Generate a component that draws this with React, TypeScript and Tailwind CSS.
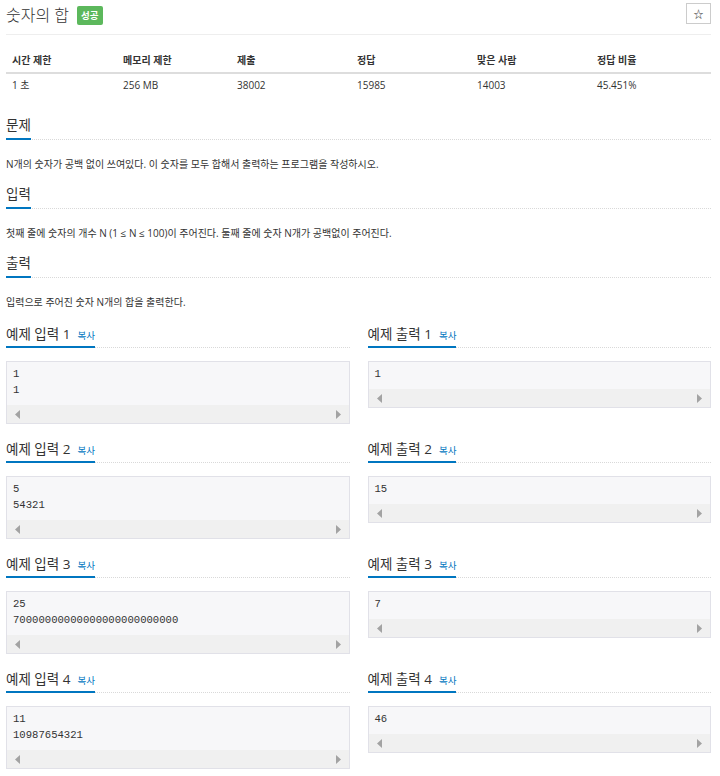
import React from 'react';

const stats = [
  { label: '시간 제한', value: '1 초' },
  { label: '메모리 제한', value: '256 MB' },
  { label: '제출', value: '38002' },
  { label: '정답', value: '15985' },
  { label: '맞은 사람', value: '14003' },
  { label: '정답 비율', value: '45.451%' },
];

const samples = [
  { input: ['1', '1'], output: ['1'] },
  { input: ['5', '54321'], output: ['15'] },
  { input: ['25', '70000000000000000000000000'], output: ['7'] },
  { input: ['11', '10987654321'], output: ['46'] },
];

function SectionTitle({ children }: { children: React.ReactNode }) {
  return (
    <div className="flex items-end border-b border-dotted border-[#d9d9d9]">
      <h3 className="-mb-px border-b-2 border-[#0076c0] pb-[4px] text-[13.5px] leading-[18px] text-[#333]">
        {children}
      </h3>
    </div>
  );
}

function SampleTitle({ label, n }: { label: string; n: number }) {
  return (
    <div className="flex items-end border-b border-dotted border-[#d9d9d9]">
      <h4 className="-mb-px flex h-[23px] items-baseline border-b-2 border-[#0076c0] pb-[3px] text-[13.5px] leading-[18px] text-[#333]">
        {label} {n}
        <span className="ml-[7px] text-[9.5px] leading-[18px] text-[#0076c0]">복사</span>
      </h4>
    </div>
  );
}

function ScrollBar() {
  return (
    <div className="flex h-[18px] items-center justify-between bg-[#f0f0f0] px-[8px]">
      <svg width="6" height="9" viewBox="0 0 6 9">
        <path d="M5 0 L0 4.5 L5 9 Z" fill="#a3a3a3" />
      </svg>
      <svg width="6" height="9" viewBox="0 0 6 9">
        <path d="M1 0 L6 4.5 L1 9 Z" fill="#a3a3a3" />
      </svg>
    </div>
  );
}

function SampleBox({ lines }: { lines: string[] }) {
  return (
    <div className="mt-[13px] border border-[#e1e1e8] bg-[#f7f7f9]">
      <pre className="px-[6px] pt-[4px] pb-[7px] font-['Liberation_Mono',monospace] text-[10.6px] leading-[16px] text-[#333]">
        {lines.join('\n')}
      </pre>
      <ScrollBar />
    </div>
  );
}

export default function App() {
  return (
    <div className="min-h-screen bg-white pt-[3px] pr-[9px] pl-[6px] font-['Open_Sans','Noto_Sans_CJK_KR',sans-serif] text-[#333]">
      {/* title */}
      <div className="flex h-[32px] items-start justify-between border-b border-[#eee]">
        <div className="flex items-center gap-[8px]">
          <h1 className="text-[16px] leading-[24px] font-light">숫자의 합</h1>
          <span className="rounded-[2px] bg-[#5cb85c] px-[4px] text-[9.5px] leading-[19px] font-bold text-white">
            성공
          </span>
        </div>
        <button className="flex h-[21px] w-[25px] items-center justify-center border border-[#ccc] bg-white text-[10px] leading-none">
          ☆
        </button>
      </div>

      {/* stats table */}
      <div className="mt-[17px] grid grid-cols-[111px_114px_120px_120px_120px_1fr] text-[10px]">
        {stats.map((s) => (
          <div key={s.label} className="border-b-2 border-[#ddd] px-[6px] pb-[4px] leading-[16px] font-bold">
            {s.label}
          </div>
        ))}
        {stats.map((s) => (
          <div key={s.label} className="px-[6px] pt-[3px] leading-[16px]">
            {s.value}
          </div>
        ))}
      </div>

      {/* sections */}
      <div className="mt-[23px]">
        <SectionTitle>문제</SectionTitle>
        <p className="mt-[16px] text-[10px] leading-[16px]">
          N개의 숫자가 공백 없이 쓰여있다. 이 숫자를 모두 합해서 출력하는 프로그램을 작성하시오.
        </p>
      </div>
      <div className="mt-[13px]">
        <SectionTitle>입력</SectionTitle>
        <p className="mt-[16px] text-[10px] leading-[16px]">
          첫째 줄에 숫자의 개수 N (1 ≤ N ≤ 100)이 주어진다. 둘째 줄에 숫자 N개가 공백없이 주어진다.
        </p>
      </div>
      <div className="mt-[13px]">
        <SectionTitle>출력</SectionTitle>
        <p className="mt-[16px] text-[10px] leading-[16px]">입력으로 주어진 숫자 N개의 합을 출력한다.</p>
      </div>

      {/* samples */}
      <div className="mt-[15px] grid grid-cols-2 gap-x-[18px]">
        {samples.map((s, i) => (
          <React.Fragment key={i}>
            <div className="mb-[16px]">
              <SampleTitle label="예제 입력" n={i + 1} />
              <SampleBox lines={s.input} />
            </div>
            <div className="mb-[16px]">
              <SampleTitle label="예제 출력" n={i + 1} />
              <SampleBox lines={s.output} />
            </div>
          </React.Fragment>
        ))}
      </div>
    </div>
  );
}
